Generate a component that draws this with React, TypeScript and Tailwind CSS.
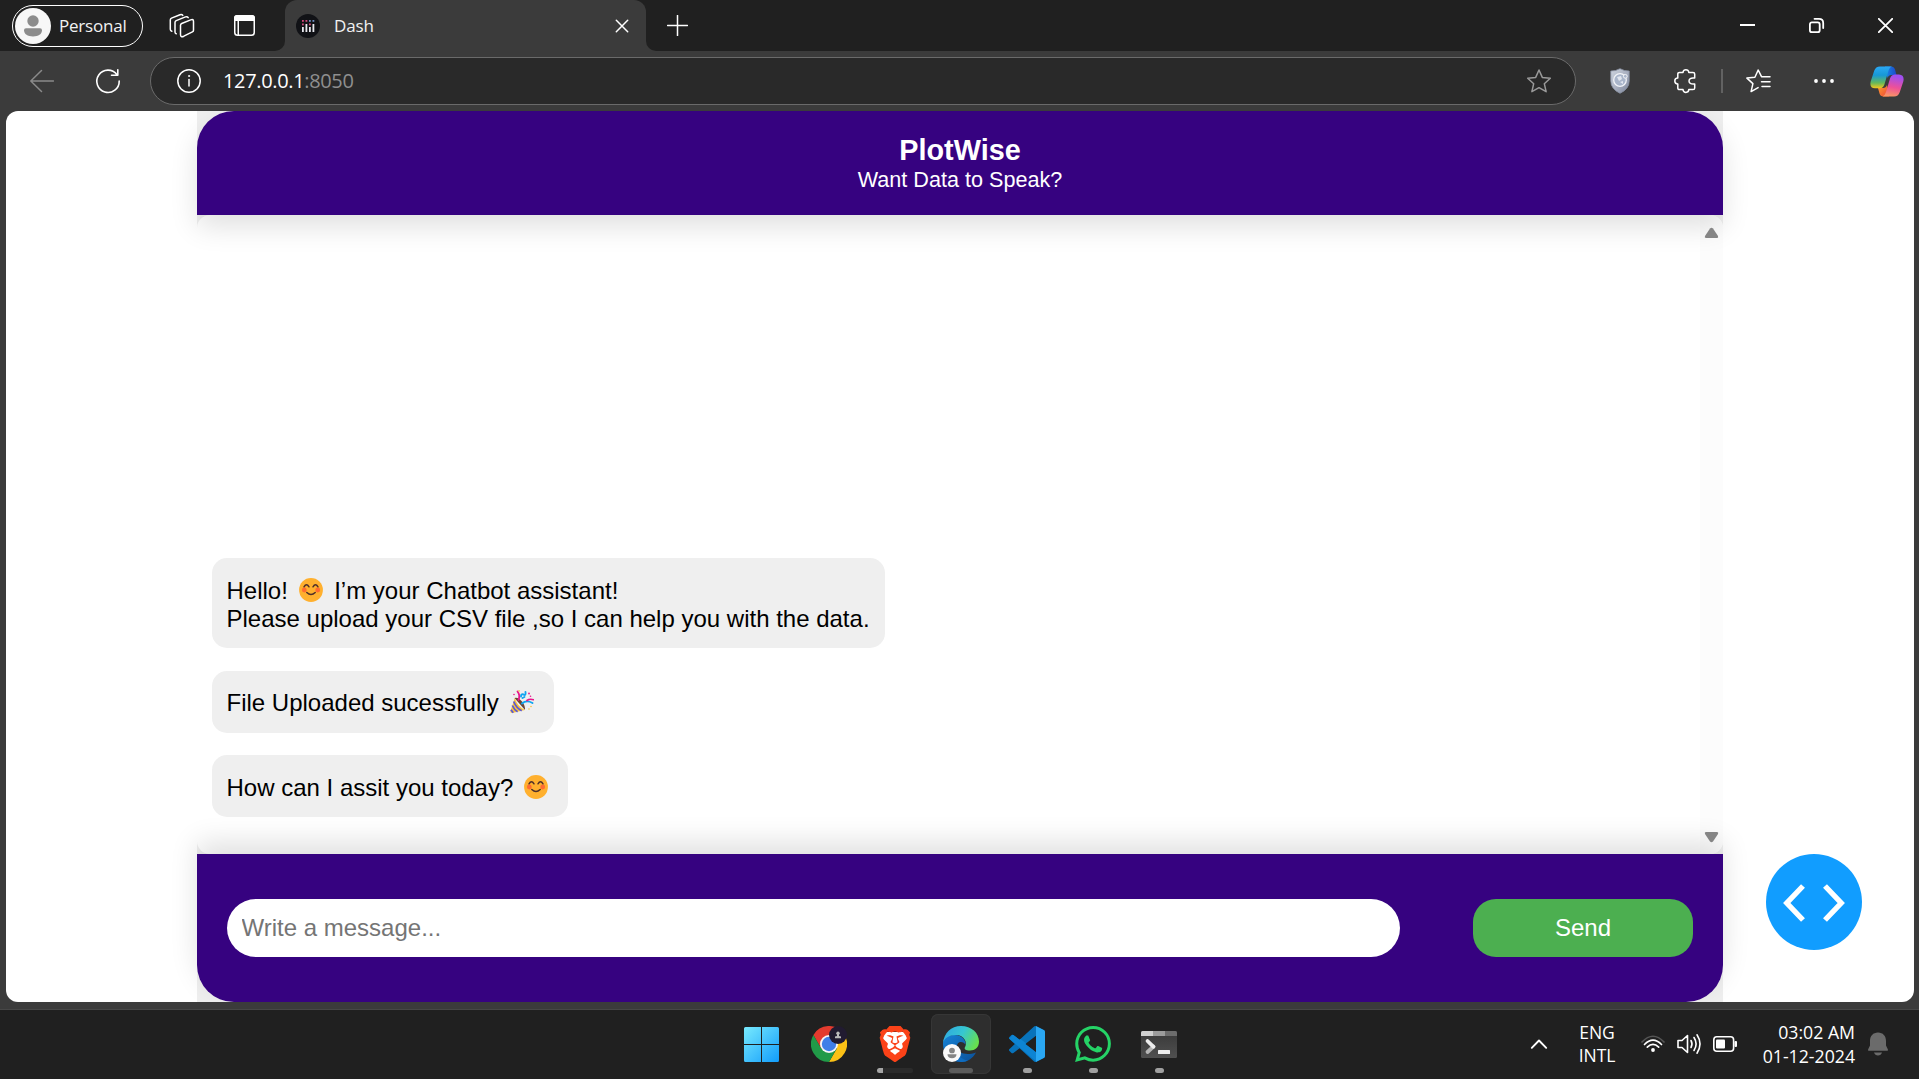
import React from "react";
import { SiBrave, SiWhatsapp } from "react-icons/si";

const line = { fill: "none", stroke: "currentColor", strokeWidth: 1.5, strokeLinecap: "round" as const, strokeLinejoin: "round" as const };

function Person({ className }: { className: string }) {
  return (
    <svg viewBox="0 0 36 36" className={className}>
      <circle cx="18" cy="18" r="18" fill="#f7f7f7" />
      <circle cx="18" cy="13" r="5.7" fill="#8c8c8c" />
      <path d="M11 20.3h14q2 0 2 2c0 3.800-3.600 6.200-9 6.200s-9-2.400-9-6.200q0-2 2-2z" fill="#8c8c8c" />
    </svg>
  );
}

function TitleBar() {
  return (
    <div className="flex h-[51px] text-white">
      <div className="flex h-[51px] w-[285px] items-center rounded-br-[10px] bg-[#202020] pl-3">
        <div className="flex h-[42px] w-[131px] items-center rounded-full border-[1.5px] border-white pl-[2px]">
          <Person className="size-9 shrink-0" />
          <span className="ml-[8px] text-[17px] tracking-[-0.2px] text-[#f2f2f2]">Personal</span>
        </div>
        <svg viewBox="0 0 26 26" className="ml-[26px] size-[26px]" {...line}>
          <path d="M11.500 12.300q0-1.300 1.200-1.800l9-3.600q2.800-1 2.800 1.500v8.800q0 1.200-1.100 1.700l-8.600 4.300q-3.300 1.500-3.300-1.600z" />
          <path d="M7.200 20.800q-1.200-.4-1.200-1.800V9.500q0-1.300 1.200-1.900l9.300-3.700q1.900-.6 2.700.8" />
          <path d="M2.800 18.200q-1.500-.4-1.500-2V7q0-1.300 1.200-1.900L11 1.700q2-.7 2.800.7" />
        </svg>
        <svg viewBox="0 0 21 21" className="ml-[39px] size-[21px]">
          <rect x=".75" y=".75" width="19.500" height="19.500" rx="2.800" {...line} />
          <path d="M0 6V3q0-3 3-3h15q3 0 3 3v3zM3.500 6H5v14H3.500z" fill="white" />
        </svg>
      </div>
      <div className="h-[51px] w-[361px] bg-[linear-gradient(#202020_50%,#3b3b3b_50%)]">
        <div className="flex h-[51px] items-center rounded-t-[12px] bg-[#3b3b3b] pl-[11px]">
          <svg viewBox="0 0 24 24" className="size-6">
            <circle cx="12" cy="12" r="12" fill="#111216" />
            <g fill="#e8e8ee">
              <rect x="6" y="13" width="1.800" height="5" /><rect x="9.500" y="10" width="1.800" height="8" />
              <rect x="13" y="13" width="1.800" height="5" /><rect x="16.500" y="10" width="1.800" height="8" />
            </g>
            <g fill="#d3497c"><rect x="6" y="6" width="1.800" height="1.800" /><rect x="9.500" y="6" width="1.800" height="1.800" /><rect x="6" y="9.500" width="1.800" height="1.800" /><rect x="13" y="9.500" width="1.800" height="1.800" /></g>
            <g fill="#6f8fc4"><rect x="13" y="6" width="1.800" height="1.800" /><rect x="16.500" y="6" width="1.800" height="1.800" /></g>
          </svg>
          <span className="ml-[14px] text-[17px] tracking-[-0.1px] text-[#f2f2f2]">Dash</span>
          <svg viewBox="0 0 12 12" className="mr-[18px] ml-auto size-3 overflow-visible" {...line}><path d="M.3.3l11.400 11.400M11.700.3L.3 11.700" /></svg>
        </div>
      </div>
      <div className="flex h-[51px] flex-1 items-center rounded-bl-[10px] bg-[#202020] pr-[26px] pl-[21px]">
        <svg viewBox="0 0 21 21" className="mb-[1px] size-[21px]" {...line}><path d="M10.500 .5v20M.5 10.500h20" /></svg>
        <div className="ml-auto flex items-center gap-[54px]">
          <span className="mb-[1px] h-[2px] w-[15px] bg-white" />
          <svg viewBox="0 0 15 15" className="size-[15px] overflow-visible" {...line} strokeWidth="1.800">
            <rect x=".9" y="4.400" width="9.800" height="9.800" rx="2" /><path d="M5.500.8h4.500q4.200 0 4.200 4.200v5" />
          </svg>
          <svg viewBox="0 0 15 15" className="size-[15px]" {...line} strokeWidth="1.800"><path d="M.8.8l13.400 13.400M14.200.8L.8 14.200" /></svg>
        </div>
      </div>
    </div>
  );
}

function Copilot() {
  return (
    <svg viewBox="0 0 34 31" className="ml-9 h-[31px] w-[34px]">
      <defs>
        <linearGradient id="cpA" x1="0" y1="0" x2="0" y2="1"><stop offset="0" stopColor="#2ba9f5" /><stop offset=".4" stopColor="#1798d6" /><stop offset=".75" stopColor="#65b95a" /><stop offset="1" stopColor="#f6c81c" /></linearGradient>
        <linearGradient id="cpB" x1=".2" y1="0" x2="0" y2="1"><stop offset="0" stopColor="#a04ff0" /><stop offset=".5" stopColor="#ee5098" /><stop offset="1" stopColor="#fba35c" /></linearGradient>
        <linearGradient id="cpC" x1="0" y1="0" x2="1" y2="0"><stop offset="0" stopColor="#1a8ae8" /><stop offset="1" stopColor="#1c49c9" /></linearGradient>
        <linearGradient id="cpD" x1="0" y1="0" x2="1" y2="1"><stop offset="0" stopColor="#fca02c" /><stop offset="1" stopColor="#f0433a" /></linearGradient>
      </defs>
      <path d="M15 .5h6q3 0 4 3l1.500 5.500h-5q-3 0-4 3z" fill="url(#cpC)" />
      <path d="M19 30.500h-5.500q-3.200 0-4-3L8 22h5q3 0 4-3z" fill="url(#cpD)" />
      <path d="M10 .5h12q-2.500.7-3.600 4.500l-4 13.500Q13.300 22 10 22.300H5Q-.8 22 .7 15.500L4.200 4.800Q5.700.5 10 .5z" fill="url(#cpA)" />
      <path d="M24 30.500H12.500q2.400-.8 3.500-4.500l4-13.500q1-3.500 4.500-4H29q5.800.5 4.300 7L29.800 26q-1.500 4.500-5.800 4.500z" fill="url(#cpB)" />
    </svg>
  );
}

function Toolbar() {
  return (
    <div className="flex h-[60px] items-center bg-[#3b3b3b] pl-[30px] text-white">
      <svg viewBox="0 0 24 24" className="mb-[1px] size-6 text-[#8a8a8a]" {...line}><path d="M23.500 12H.8M11.500 1.500L.8 12l10.700 10.500" /></svg>
      <svg viewBox="0 0 24 24" className="ml-[42px] size-6 overflow-visible" {...line} strokeWidth="1.600"><path d="M21.800 .7v5.600h-6.300M20.900 5.500A11.200 11.200 0 1 0 23.200 12" /></svg>
      <div className="ml-[30px] flex h-12 w-[1426px] items-center rounded-full border-[1.5px] border-[#6a6a6a] bg-[#292929] pr-6 pl-[26px]">
        <svg viewBox="0 0 24 24" className="size-6" {...line}><circle cx="12" cy="12" r="11.200" /><path d="M12 10.500v6.500" /><circle cx="12" cy="7" r=".6" fill="currentColor" strokeWidth=".8" /></svg>
        <span className="ml-[22px] text-[20px] tracking-[-0.350px] text-[#8f8f8f]"><span className="text-white">127.0.0.1</span>:8050</span>
        <svg viewBox="0 0 24 24" className="ml-auto size-6 text-[#9a9a9a]" {...line}><path d="M12 1l3.300 7.400 8 .8-6 5.500 1.800 8L12 18.700 4.900 22.700l1.800-8-6-5.500 8-.8z" /></svg>
      </div>
      <svg viewBox="0 0 20 26" className="ml-[34px] h-[26px] w-5">
        <defs><linearGradient id="shield" x1="0" x2="1" y1="0" y2="1"><stop offset="0" stopColor="#cfd5e0" /><stop offset=".5" stopColor="#aab1c1" /><stop offset="1" stopColor="#7b8499" /></linearGradient></defs>
        <path d="M10 .7q4.500 2.500 9.200 2.300v10q0 8-9.200 12.300Q.8 21 .8 13V3Q5.500 3.200 10 .7z" fill="url(#shield)" stroke="#8c94a6" strokeWidth=".8" />
        <circle cx="10" cy="12" r="6.300" fill="#a9b5ca" stroke="#f2f4f8" strokeWidth="1.300" />
        <path d="M7 9l4-1 1 3-3 2zM10 14l3-1v3z" fill="#e1e6ef" /><circle cx="15.300" cy="8.300" r="1.900" fill="#a9b5ca" stroke="#f2f4f8" />
      </svg>
      <svg viewBox="0 0 22 24" className="ml-[44px] h-6 w-[22px] overflow-visible" {...line}>
        <path d="M9 3.400C9 -.2 14.800-.2 14.800 3.400H19q1.700 0 1.700 1.700v4C16.600 8.500 15 10 15 12s1.600 3.500 5.700 3v3.900q0 1.700-1.700 1.700h-4.200c0 3.700-5.800 3.700-5.800 0H5.500q-1.700 0-1.700-1.700v-4C-.2 14.900-.2 9.100 3.800 9.100v-4q0-1.700 1.700-1.700z" />
      </svg>
      <span className="ml-[25px] h-6 w-[2px] bg-[#626262]" />
      <svg viewBox="0 0 25 24" className="ml-[23px] h-6 w-[25px] overflow-visible" {...line}>
        <path d="M15.500 7.700L12.200 1 8.900 8.300l-8 .8 6 5.500-1.800 8 7-4M16 7.800h8M15.500 12.700H24M16 17.600h8" />
      </svg>
      <svg viewBox="0 0 20 4" className="ml-[43px] h-1 w-5" fill="white"><circle cx="2" cy="2" r="1.900" /><circle cx="10" cy="2" r="1.900" /><circle cx="18" cy="2" r="1.900" /></svg>
      <Copilot />
    </div>
  );
}

function Smile() {
  return (
    <svg viewBox="0 0 24 24" role="img" aria-label="smiling face" className="mr-[5px] ml-[4px] inline-block size-6 align-[-3px]">
      <circle cx="12" cy="12" r="11.900" fill="#ffb02e" />
      <circle cx="5.300" cy="12" r="2.400" fill="#ff6b31" /><circle cx="18.700" cy="12" r="2.400" fill="#ff6b31" />
      <path d="M5 8.800q2.500-4 5 0M14 8.800q2.500-4 5 0M7.800 14.500q4.200 4 8.400 0" fill="none" stroke="#50302a" strokeWidth="1.500" strokeLinecap="round" />
    </svg>
  );
}

function Party() {
  return (
    <svg viewBox="0 0 24 24" role="img" aria-label="party popper" className="mr-[5px] ml-[5px] inline-block size-6 align-[-3px]">
      <path d="M4.500 8q3.500-1.200 8 4 3 4.500 2.500 8z" fill="#6d4534" />
      <path d="M4.800 8L.4 21.200q-.3 2 1.800 1.800L14.800 20q-7.500-3.500-10-12z" fill="#f9c23c" />
      <path d="M3.700 11.500q2.800 6.800 8 9.200M2.300 15.500q2 4.500 5.300 6.300M.9 19.700l2.300 3" fill="none" stroke="#5b59d6" strokeWidth="1.800" />
      <path d="M7.500 1.500q3 3.500 1 8.500" fill="none" stroke="#e8168b" strokeWidth="1.800" strokeLinecap="round" />
      <path d="M11 6.500q0-3 2.500-2 2.500 1.500 2-2.500M12 13.500q4.500-4 10.500-.5M12.500 8l2-1" fill="none" stroke="#10a5f0" strokeWidth="1.900" strokeLinecap="round" />
      <path d="M17 10.500q2.500-2 6.500-.8" fill="none" stroke="#e8168b" strokeWidth="1.700" strokeLinecap="round" />
      <g fill="#e8168b"><circle cx="4" cy="4.500" r=".8" /><circle cx="19" cy="3.500" r=".9" /><circle cx="20.500" cy="6.300" r=".8" /></g>
      <g fill="#f9c23c"><circle cx="9" cy=".9" r=".8" /><circle cx="21" cy="16.500" r=".8" /><circle cx="19" cy="19" r=".8" /></g>
    </svg>
  );
}

function Bubble({ children }: { children: React.ReactNode }) {
  return <div className="w-fit rounded-[15px] bg-[#efefef] px-[15px] pt-[18.500px] pb-[15.500px] text-2xl leading-7 text-black">{children}</div>;
}

function Page() {
  return (
    <div className="flex h-[891px] bg-[#3b3b3b] pr-[5px] pl-[6px] font-['Liberation_Sans',Arial,sans-serif]">
      <div className="relative flex flex-1 justify-center overflow-hidden rounded-[12px] bg-white">
        <div className="mr-[1px] flex w-[1526px] flex-col bg-[#efefef]">
          <header className="relative z-10 h-[104px] rounded-t-[37px] bg-[#360280] pt-[23px] pl-[1px] text-center text-white shadow-[0_12px_28px_rgba(0,0,0,0.12)]">
            <h1 className="text-[28.800px] leading-[33px] font-bold">PlotWise</h1>
            <p className="text-[21.600px] leading-[25px]">Want Data to Speak?</p>
          </header>
          <main className="flex h-[639px] rounded-[13px] bg-white">
            <div className="flex flex-1 flex-col justify-end gap-[22.500px] pb-[37px] pl-[15px]">
              <Bubble>Hello! <Smile /> I’m your Chatbot assistant!<br />Please upload your CSV file ,so I can help you with the data.</Bubble>
              <Bubble>File Uploaded sucessfully <Party /></Bubble>
              <Bubble>How can I assit you today? <Smile /></Bubble>
            </div>
            <div className="flex w-[23px] flex-col items-center justify-between rounded-r-[13px] bg-[#fcfcfc] pt-3 pb-[11px]">
              <svg viewBox="0 0 15 12" className="relative z-20 h-3 w-[15px]"><path d="M6 1.500q1.500-1.500 3 0l5 7.500q.8 2-1 2H2q-1.800 0-1-2z" fill="#858585" /></svg>
              <svg viewBox="0 0 15 12" className="relative z-20 h-3 w-[15px]"><path d="M6 10.500q1.500 1.500 3 0l5-7.500q.8-2-1-2H2q-1.800 0-1 2z" fill="#858585" /></svg>
            </div>
          </main>
          <footer className="relative z-10 flex h-[148px] items-start rounded-b-[37px] bg-[#360280] px-[30px] pt-[45px] shadow-[0_-12px_28px_rgba(0,0,0,0.12)]">
            <input placeholder="Write a message..." className="h-[58px] w-[1173px] rounded-[29px] bg-white px-[15px] text-2xl placeholder:text-[#757575]" />
            <button className="ml-[73px] h-[58px] w-[220px] rounded-[23px] bg-[#4caf50] pl-[1px] text-2xl text-white">Send</button>
          </footer>
        </div>
        <button aria-label="debug" className="absolute right-[52px] bottom-[52px] flex size-24 items-center justify-center rounded-full bg-[#119dff]">
          <svg viewBox="0 0 62 38" className="mt-[1px] mr-[1px] h-[38px] w-[62px]" fill="none" stroke="white" strokeWidth="5.400"><path d="M20 2L3.800 19 20 36M42 2l16.200 17L42 36" /></svg>
        </button>
      </div>
    </div>
  );
}

function Tile({ children, mark, active }: { children: React.ReactNode; mark?: string; active?: boolean }) {
  return (
    <div className={`flex h-[60px] w-[60px] flex-col items-center rounded-[7px] pt-[12px] ${active ? "bg-[#2e2e2e] ring-1 ring-[#363636] ring-inset" : ""}`}>
      <div className="flex size-9 items-center justify-center">{children}</div>
      {mark && <span className={`mt-[6px] h-[5px] rounded-full ${mark}`} />}
    </div>
  );
}

function Taskbar() {
  return (
    <div className="flex h-[77px] flex-col bg-[#202020] text-white">
      <div className="h-[8px] shrink-0 border-b border-[#474747] bg-[#3b3b3b]" />
      <div className="flex flex-1 pt-[4px] pl-[731px]">
        <div className="flex gap-[6px]">
          <div className="mr-[2px]">
            <Tile>
              <svg viewBox="0 0 35 35" className="mt-[1px] size-[35px]">
                <defs><linearGradient id="win" gradientUnits="userSpaceOnUse" x1="0" y1="0" x2="35" y2="35"><stop offset="0" stopColor="#78eafe" /><stop offset="1" stopColor="#119cfb" /></linearGradient></defs>
                <path d="M1.500 0H17v17H0V1.500Q0 0 1.500 0zM18 0h15.500Q35 0 35 1.500V17H18zM0 18h17v17H1.500Q0 35 0 33.500zM18 18h17v15.500q0 1.500-1.500 1.500H18z" fill="url(#win)" />
              </svg>
            </Tile>
          </div>
          <Tile>
            <svg viewBox="0 0 36 36" className="size-9">
              <path d="M2.400 9A18 18 0 0 1 33.600 9L18 18z" fill="#e33b2e" />
              <path d="M33.600 9A18 18 0 0 1 18 36l7.800-13.500L18 9z" fill="#fbc116" />
              <path d="M2.400 9L10.200 22.500 18 18V9z" fill="#e33b2e" /><path d="M2.400 9l7.800 13.500L18 27l7.800-4.500L18 36A18 18 0 0 1 2.400 9z" fill="#219a48" />
              <circle cx="18" cy="18" r="9" fill="#f5f5f5" /><circle cx="18" cy="18" r="7.200" fill="#3f7ee8" />
              <circle cx="27" cy="9" r="9" fill="#211b31" /><circle cx="27" cy="7.300" r="1.700" fill="#bbb" /><path d="M26 8h2v2l2 .6v1.600h-6v-1.600l2-.6z" fill="#bbb" />
            </svg>
          </Tile>
          <Tile mark="w-9 bg-[linear-gradient(90deg,#a5a5a5_6px,#2b2b2b_6px)]">
            <svg viewBox="0 0 24 24" className="h-9 w-9 overflow-visible">
              <path d="M5 4h14l1.500 6L17 19l-5 3-5-3L3.500 10z" fill="white" />
              <SiBrave size={24} color="#fb4218" />
            </svg>
          </Tile>
          <Tile active mark="w-6 bg-[#5c5c5c]">
            <svg viewBox="0 0 36 36" className="size-9">
              <defs>
                <linearGradient id="edA" x1="0" y1=".2" x2="1" y2=".6"><stop offset="0" stopColor="#2fa9e0" /><stop offset=".5" stopColor="#36c6d2" /><stop offset="1" stopColor="#68e04c" /></linearGradient>
                <linearGradient id="edB" x1="0" y1="0" x2="1" y2="1"><stop offset="0" stopColor="#1682d6" /><stop offset="1" stopColor="#0b4f96" /></linearGradient>
              </defs>
              <path d="M0 18C0 11 5 8.500 12 9c7 .5 11 5 10.500 9.500C19 14 13.500 16 14 21c.5 6 9 9 19 5.500C29.500 33 24 36 18 36 7 36 0 28 0 18z" fill="url(#edB)" />
              <path d="M14 17.500C10 24 16 33 25 34.600 20 37.500 11 36 7.500 29 4.500 23 7 17 14 17.500z" fill="#0f6cc0" />
              <path d="M0 17C1 7 8 0 18 0c10.500 0 18 7 18 15.500 0 6-4 9-9 9-4.500 0-6.500-1.500-4.700-4 2.200-3.500-.8-11.500-9.300-11.500C6 9 1.500 12 0 17z" fill="url(#edA)" />
              <g transform="translate(0 18) scale(.5)"><circle cx="18" cy="18" r="18" fill="#fafafa" /><circle cx="18" cy="13" r="5.700" fill="#858585" /><path d="M9 20.500h18c0 5-3.600 8-9 8s-9-3-9-8z" fill="#858585" /></g>
            </svg>
          </Tile>
          <Tile mark="w-[9px] bg-[#a0a0a0]">
            <svg viewBox="0 0 24 24" className="size-9">
              <defs><clipPath id="vsc"><path clipRule="evenodd" d="M23.150 2.587L18.210.21a1.494 1.494 0 0 0-1.705.29l-9.460 8.630-4.120-3.128a.999.999 0 0 0-1.276.057L.327 7.261A1 1 0 0 0 .326 8.740L3.899 12 .326 15.260a1 1 0 0 0 .001 1.479L1.650 17.940a.999.999 0 0 0 1.276.057l4.120-3.128 9.460 8.630a1.492 1.492 0 0 0 1.704.290l4.942-2.377A1.500 1.500 0 0 0 24 20.060V3.939a1.500 1.500 0 0 0-.850-1.352zm-5.146 14.861L10.826 12l7.178-5.448v10.896z" /></clipPath></defs>
              <g clipPath="url(#vsc)"><path d="M0 0h24v24H0z" fill="#0873bb" /><path d="M0 8.500L3 5l15.500 12v7z" fill="#0d84d3" /><path d="M18 0h6v24h-6z" fill="#2aa7f3" /></g>
            </svg>
          </Tile>
          <Tile mark="w-[9px] bg-[#a0a0a0]"><SiWhatsapp size={36} color="#25d366" /></Tile>
          <Tile mark="w-[9px] bg-[#a0a0a0]">
            <svg viewBox="0 0 36 27" className="h-[27px] w-9">
              <defs><linearGradient id="term" x1="0" y1="0" x2="0" y2="1"><stop offset="0" stopColor="#383838" /><stop offset="1" stopColor="#505050" /></linearGradient></defs>
              <rect width="36" height="27" rx="1.500" fill="url(#term)" /><path d="M1.500 0H12v5H0V1.500Q0 0 1.500 0z" fill="#cfcfcf" /><path d="M12 0h12v5H12z" fill="#9b9b9b" /><path d="M24 0h10.500Q36 0 36 1.500V5H24z" fill="#6c6c6c" />
              <path d="M6.500 21l6-5.500" stroke="#b5b5b5" strokeWidth="3.800" strokeLinecap="round" /><path d="M6.500 10l6 5.800" stroke="#ededed" strokeWidth="3.800" strokeLinecap="round" /><rect x="17" y="19" width="12" height="4" fill="#eee" rx=".5" />
            </svg>
          </Tile>
        </div>
        <div className="mt-[-5px] ml-auto flex h-[70px] items-center pr-[31px]">
          <svg viewBox="0 0 16 10" className="size-4 overflow-visible" {...line} strokeWidth="1.900"><path d="M.8 8.800L8 1.500l7.200 7.300" /></svg>
          <div className="ml-7 w-11 text-center text-[17.500px] leading-[23px] tracking-[-0.1px]">ENG<br />INTL</div>
          <svg viewBox="0 0 24 18" className="ml-[22px] h-[18px] w-6" {...line} strokeWidth="1.700">
            <path d="M1 7Q12-4.500 23 7" stroke="#555" /><path d="M3.500 9.500Q12 .8 20.500 9.500M6.300 12.200q5.700-5.500 11.400 0" /><circle cx="12" cy="15" r="1.900" fill="white" stroke="none" />
          </svg>
          <svg viewBox="0 0 24 20" className="ml-3 h-5 w-6 overflow-visible" {...line} strokeWidth="1.600">
            <path d="M1 6.500h4l5.500-5v17L5 13.500H1z" /><path d="M14 6.500q2 3.500 0 7M17 3.500q4.200 6.500 0 13M20 .8q6 9.200 0 18.400" />
          </svg>
          <svg viewBox="0 0 24 16" className="ml-3 h-4 w-6"><rect x=".8" y=".8" width="19.800" height="14.400" rx="3" {...line} strokeWidth="1.600" /><rect x="3" y="3.500" width="9" height="9" rx="1" fill="white" /><rect x="21.500" y="5" width="2.500" height="6" rx="1" fill="white" /></svg>
          <div className="ml-[18px] w-[100px] text-right text-[17.700px] leading-6">03:02 AM<br />01-12-2024</div>
          <svg viewBox="0 0 20 24" className="ml-[13px] h-6 w-5" fill="#6b6b6b"><path d="M10 .5c-5 0-8 3.500-8 8.500v4.500L.2 17.200q-.6 1.600 1 1.600h17.600q1.600 0 1-1.600L18 13.500V9C18 4 15 .5 10 .5zM6 20.500h8q-1 3-4 3t-4-3z" /></svg>
        </div>
      </div>
    </div>
  );
}

export default function App() {
  return (
    <div className="flex h-[1079px] w-[1919px] flex-col overflow-hidden bg-[#3b3b3b] font-['Open_Sans','Noto_Sans',sans-serif]">
      <TitleBar />
      <Toolbar />
      <Page />
      <Taskbar />
    </div>
  );
}
